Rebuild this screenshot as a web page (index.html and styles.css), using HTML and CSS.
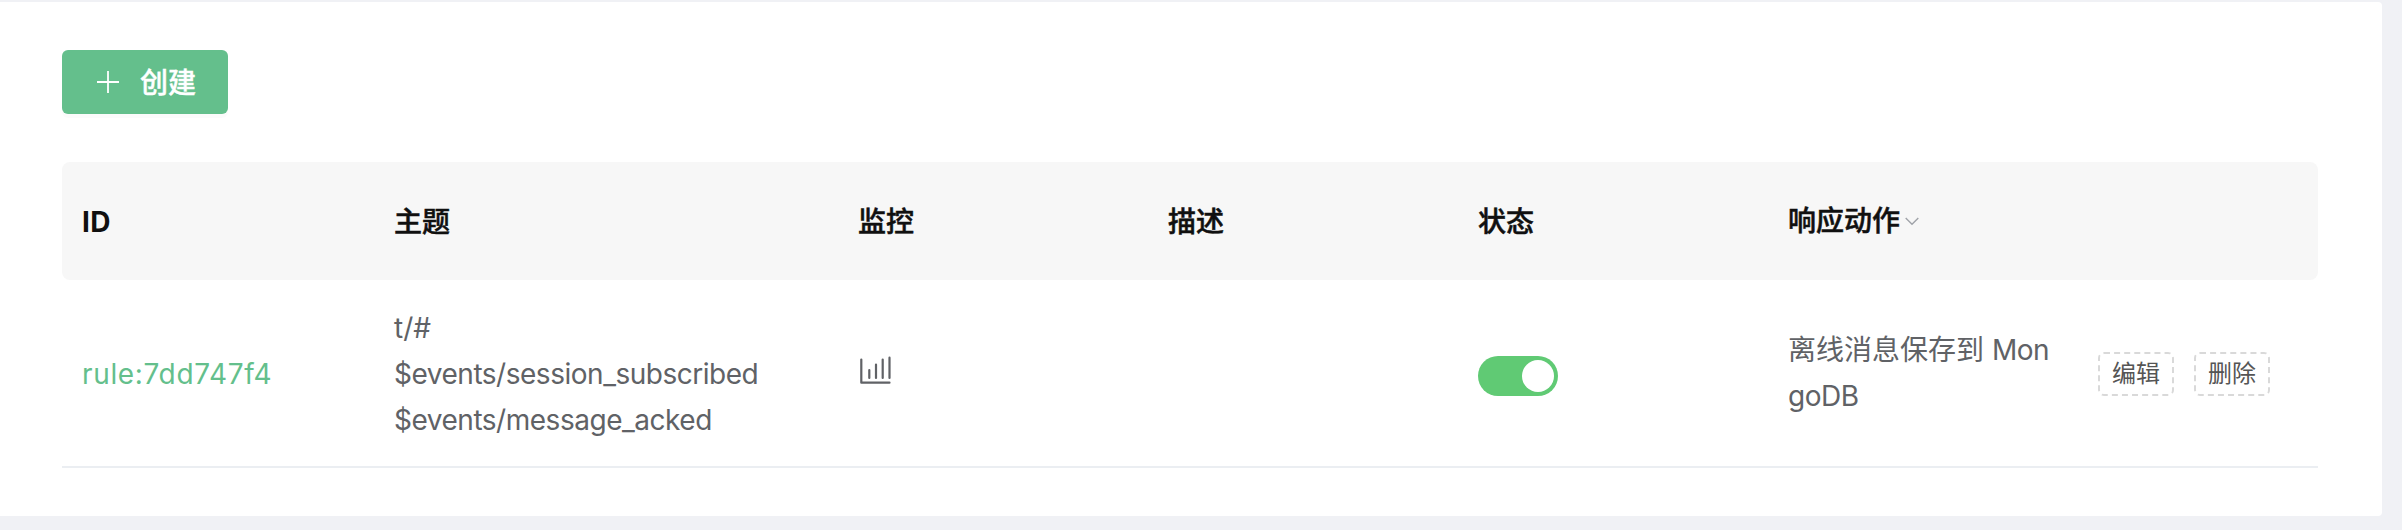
FILE: index.html
```html
<!DOCTYPE html>
<html lang="zh-CN">
<head>
<meta charset="utf-8">
<title>规则</title>
<link rel="stylesheet" href="styles.css">
</head>
<body>
<main class="card">
  <button class="create" type="button">
    <svg class="plus" width="24" height="24" viewBox="0 0 24 24"><path d="M12 1v22M1 12h22"/></svg>
    <span>创建</span>
  </button>
  <section class="table">
    <div class="row head">
      <div class="cell id-title">ID</div>
      <div class="cell">主题</div>
      <div class="cell">监控</div>
      <div class="cell">描述</div>
      <div class="cell">状态</div>
      <div class="cell filter">响应动作<svg class="chevron" width="14" height="10" viewBox="0 0 14 10"><path d="M.7 2 7 8.300l6.300-6.300"/></svg></div>
      <div class="cell"></div>
    </div>
    <div class="row body">
      <div class="cell rule-cell"><a class="rule">rule:7dd747f4</a></div>
      <div class="cell topics"><div>t/#</div><div class="event">$events/session_subscribed</div><div class="event">$events/message_acked</div></div>
      <div class="cell"><svg class="chart" width="34" height="30" viewBox="0 0 34 30"><path d="M3.300 3.500v23.200H31.500M11.300 14v8M18 8.500v13.500M24.700 3.500v18.500M31.500 1.700v20.300"/></svg></div>
      <div class="cell"></div>
      <div class="cell"><span class="switch"><span class="knob"></span></span></div>
      <div class="cell actions"><div>离线消息保存到 <span class="event">Mon</span></div><div class="event">goDB</div></div>
      <div class="cell buttons"><button class="mini" type="button">编辑</button><button class="mini" type="button">删除</button></div>
    </div>
  </section>
</main>
</body>
</html>
```
FILE: styles.css
```css
* { box-sizing: border-box; }
body {
  margin: 0;
  padding: 2px 20px 14px 0;
  height: 530px;
  background: #f0f1f5;
  font-family: Inter, "Noto Sans CJK SC", sans-serif;
  font-size: 28px;
  line-height: 46px;
  color: #606266;
}
button { font: inherit; margin: 0; }
.card {
  height: 514px;
  padding: 48px 64px 0 62px;
  background: #fff;
  border-radius: 0 4px 4px 0;
}
.create {
  display: flex;
  align-items: center;
  gap: 20px;
  width: 166px;
  height: 64px;
  padding: 0 0 0 34px;
  border: 0;
  border-radius: 6px;
  background: #64bf8c;
  color: #fff;
  font-weight: 500;
  -webkit-text-stroke: .4px;
  box-shadow: 0 4px 0 rgba(0, 0, 0, .016);
}
.create span { padding-top: 1px; }
.plus { fill: none; stroke: #fff; stroke-width: 1.8; }
.table { margin-top: 48px; }
.row {
  display: grid;
  grid-template-columns: 312px 464px 310px 310px 310px 310px 240px;
  align-items: center;
}
.cell { padding-left: 20px; white-space: nowrap; }
.head {
  height: 118px;
  border-radius: 8px;
  background: #f7f7f7;
  color: #101010;
  font-weight: 500;
  -webkit-text-stroke: .5px;
}
.head .cell { padding-top: 2px; }
.head .id-title { font-weight: 700; letter-spacing: .4px; -webkit-text-stroke: 0; }
.head .filter { display: flex; align-items: center; gap: 5px; padding-top: 0; }
.chevron { fill: none; stroke: #a0a3a9; stroke-width: 1.4; }
.body { height: 188px; border-bottom: 2px solid #ebeef2; }
.rule-cell, .topics { padding-top: 2px; }
.rule { color: #64bf8c; letter-spacing: .65px; }
.event { letter-spacing: -.48px; }
.chart {
  display: block;
  margin-bottom: 4px;
  fill: none;
  stroke: #606266;
  stroke-width: 2.2;
  stroke-linecap: round;
  stroke-linejoin: round;
}
.switch {
  display: flex;
  justify-content: flex-end;
  width: 80px;
  height: 40px;
  margin-top: 5px;
  padding: 4px;
  border-radius: 20px;
  background: #60ca74;
}
.knob { width: 32px; height: 32px; border-radius: 50%; background: #fff; }
.buttons { display: flex; gap: 20px; padding-top: 2px; }
.mini {
  width: 76px;
  height: 44px;
  padding: 0;
  border: 2px dashed #d9d9d9;
  border-radius: 6px;
  background: #fff;
  color: #555;
  font-size: 24px;
  line-height: 38px;
}
```
